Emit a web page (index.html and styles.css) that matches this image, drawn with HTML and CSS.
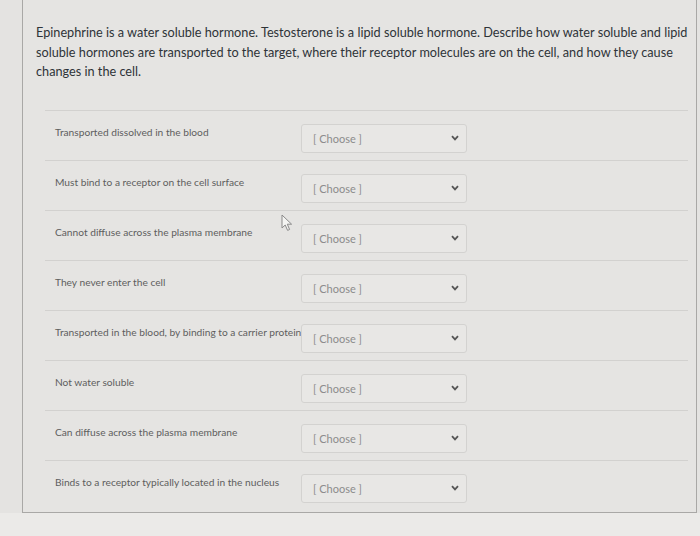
FILE: index.html
```html
<!DOCTYPE html>
<html lang="en">
<head>
<meta charset="utf-8">
<title>Matching question</title>
<link rel="stylesheet" href="styles.css">
</head>
<body>
<div class="page">
  <div class="card">
    <p class="question">Epinephrine is a water soluble hormone. Testosterone is a lipid soluble hormone. Describe how water soluble and lipid soluble hormones are transported to the target, where their receptor molecules are on the cell, and how they cause changes in the cell.</p>
    <div class="rows">
      <div class="row">
        <span class="label">Transported dissolved in the blood</span>
        <div class="select"><span class="choose">[ Choose ]</span><svg class="chev" viewBox="0 0 8 6" width="8" height="6"><path d="M1 1.2 L4 4.4 L7 1.2" fill="none" stroke="#555" stroke-width="1.8"/></svg></div>
      </div>
      <div class="row">
        <span class="label">Must bind to a receptor on the cell surface</span>
        <div class="select"><span class="choose">[ Choose ]</span><svg class="chev" viewBox="0 0 8 6" width="8" height="6"><path d="M1 1.2 L4 4.4 L7 1.2" fill="none" stroke="#555" stroke-width="1.8"/></svg></div>
      </div>
      <div class="row">
        <span class="label">Cannot diffuse across the plasma membrane</span>
        <div class="select"><span class="choose">[ Choose ]</span><svg class="chev" viewBox="0 0 8 6" width="8" height="6"><path d="M1 1.2 L4 4.4 L7 1.2" fill="none" stroke="#555" stroke-width="1.8"/></svg></div>
        <svg class="cursor" viewBox="0 0 12 18" width="12" height="18"><path d="M1 1 L1 14 L4.2 11 L6.6 16.4 L8.6 15.5 L6.3 10.2 L10.6 10.2 Z" fill="#f4f4f2" stroke="#8a8a8a" stroke-width="1"/></svg>
      </div>
      <div class="row">
        <span class="label">They never enter the cell</span>
        <div class="select"><span class="choose">[ Choose ]</span><svg class="chev" viewBox="0 0 8 6" width="8" height="6"><path d="M1 1.2 L4 4.4 L7 1.2" fill="none" stroke="#555" stroke-width="1.8"/></svg></div>
      </div>
      <div class="row">
        <span class="label">Transported in the blood, by binding to a carrier protein</span>
        <div class="select"><span class="choose">[ Choose ]</span><svg class="chev" viewBox="0 0 8 6" width="8" height="6"><path d="M1 1.2 L4 4.4 L7 1.2" fill="none" stroke="#555" stroke-width="1.8"/></svg></div>
      </div>
      <div class="row">
        <span class="label">Not water soluble</span>
        <div class="select"><span class="choose">[ Choose ]</span><svg class="chev" viewBox="0 0 8 6" width="8" height="6"><path d="M1 1.2 L4 4.4 L7 1.2" fill="none" stroke="#555" stroke-width="1.8"/></svg></div>
      </div>
      <div class="row">
        <span class="label">Can diffuse across the plasma membrane</span>
        <div class="select"><span class="choose">[ Choose ]</span><svg class="chev" viewBox="0 0 8 6" width="8" height="6"><path d="M1 1.2 L4 4.4 L7 1.2" fill="none" stroke="#555" stroke-width="1.8"/></svg></div>
      </div>
      <div class="row">
        <span class="label">Binds to a receptor typically located in the nucleus</span>
        <div class="select"><span class="choose">[ Choose ]</span><svg class="chev" viewBox="0 0 8 6" width="8" height="6"><path d="M1 1.2 L4 4.4 L7 1.2" fill="none" stroke="#555" stroke-width="1.8"/></svg></div>
      </div>
    </div>
  </div>
</div>
</body>
</html>
```
FILE: styles.css
```css
html, body {
  margin: 0;
  padding: 0;
}
body {
  background: #ebeae8;
  font-family: Lato, "Open Sans", "Liberation Sans", sans-serif;
  width: 700px;
  height: 536px;
  overflow: hidden;
}
.page {
  padding: 0 3px 0 22px;
  background: #e4e3e1;
}
.card {
  border: 1px solid #a9a8a6;
  border-top: none;
  background: #e5e4e2;
  padding-bottom: 2px;
}
.question {
  margin: 0;
  padding: 23px 4px 28px 13px;
  font-size: 12.7px;
  line-height: 19.5px;
  color: #2e3338;
}
.rows {
  margin: 0 8px 0 22px;
}
.row {
  position: relative;
  display: flex;
  align-items: flex-start;
  box-sizing: border-box;
  height: 50px;
  padding-top: 13px;
  border-top: 1px solid #d2d1cf;
}
.label {
  width: 256px;
  flex: none;
  padding-left: 10px;
  box-sizing: border-box;
  font-size: 10.2px;
  line-height: 16px;
  color: #5e5e5e;
  white-space: nowrap;
}
.select {
  width: 166px;
  height: 29px;
  box-sizing: border-box;
  border: 1px solid #d3d2d0;
  border-radius: 3px;
  background: #e8e7e5;
  display: flex;
  align-items: center;
  justify-content: space-between;
  padding: 0 7px 0 11px;
}
.choose {
  font-size: 11px;
  color: #8c8c8c;
}
.chev {
  display: block;
}
.cursor {
  position: absolute;
  left: 236px;
  top: 3px;
}
```
